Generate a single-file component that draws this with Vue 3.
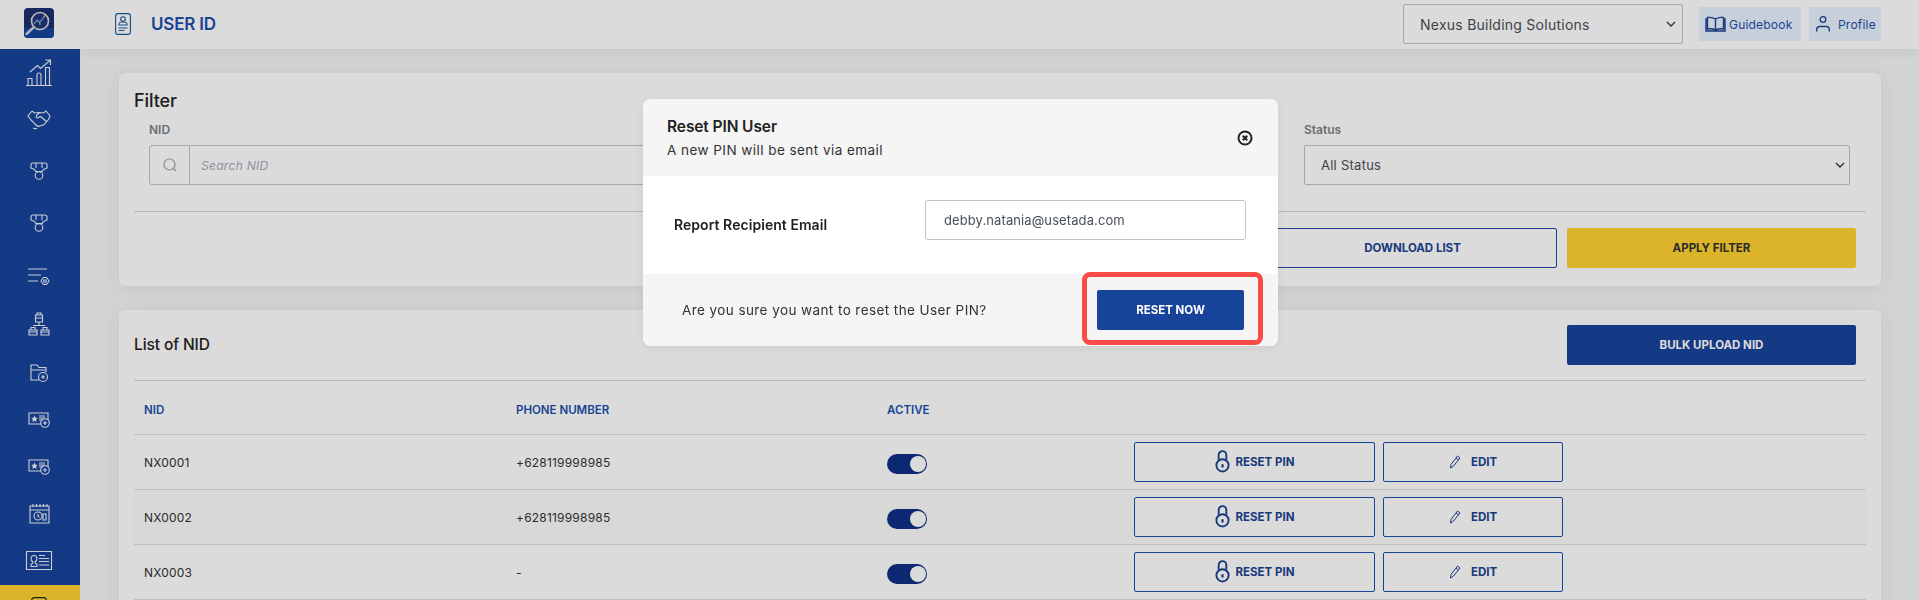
<script setup>
const rows = [
  { nid: 'NX0001', phone: '+628119998985' },
  { nid: 'NX0002', phone: '+628119998985' },
  { nid: 'NX0003', phone: '-' }
]
</script>

<template>
  <div class="app">
    <aside class="side">
      <div class="brand">
        <svg width="30" height="30" viewBox="0 0 30 30">
          <rect width="30" height="30" rx="4" fill="#1b2f6e" />
          <path d="M0 20h30v6a4 4 0 0 1-4 4H4a4 4 0 0 1-4-4z" fill="#18439b" />
          <circle cx="16" cy="13" r="8.500" fill="#20367a" stroke="#d8dce4" stroke-width="1.600" />
          <path d="M10 16l3-4 2.500 2.500L20 9" fill="none" stroke="#8fb6e8" stroke-width="1.100" />
          <circle cx="16" cy="16" r="1" fill="#6fc844" />
          <path d="M20 9l1-2" stroke="#ecd040" stroke-width="1.200" />
          <path d="M9.500 19.500L2.500 26" stroke="#cfd2da" stroke-width="2.400" stroke-linecap="round" />
        </svg>
      </div>
      <nav class="nav">
        <a class="item">
          <svg width="26" height="27" viewBox="0 0 26 27"><path d="M0 26.500h26M2 26v-6.500h4V26M11 26V16a2 2 0 0 1 4 0v10M19.500 26V8.500h4V26M4 13l7.500-6.500 3 3L24 1.500M19.500 1h5v5" /></svg>
        </a>
        <a class="item">
          <svg width="24" height="19" viewBox="0 0 24 19"><path d="M5 1L1 6l2.500 3.500L9 15q2 2 4 1l4-1.500 4.500-5L23 6l-4-5-2.500 2-4-.5-3 3q-1 2.500 1 2.500l3-1.500 6 5M5 1l2.500 2 5-.5M6 18q2 1 4 .5" /></svg>
        </a>
        <a class="item shift-m">
          <svg width="18" height="18" viewBox="0 0 18 18"><path d="M3 1h12a2 2 0 0 1 2 2v3q-4 1-5 3.500H6Q5 7 1 6V3a2 2 0 0 1 2-2zM6 1v5M12 1v5" /><circle cx="9" cy="13.500" r="3.800" /></svg>
        </a>
        <a class="item shift-a">
          <svg width="18" height="18" viewBox="0 0 18 18"><path d="M3 1h12a2 2 0 0 1 2 2v3q-4 1-5 3.500H6Q5 7 1 6V3a2 2 0 0 1 2-2zM6 1v5M12 1v5" /><circle cx="9" cy="13.500" r="3.800" /></svg>
        </a>
        <a class="item shift-b">
          <svg width="22" height="18" viewBox="0 0 22 18"><path d="M0 1h19M0 7h13M0 13h10M13 13l2.500-3.500h3L21 13l-2.500 3.500h-3z" /><circle cx="17" cy="13" r="1.300" /></svg>
        </a>
        <a class="item">
          <svg width="22" height="23" viewBox="0 0 22 23"><path d="M7.500 3h7v7h-7zM9 3V1h4v2M7.500 6h7M11 10v3.500M5 13.500h12M1 18h8v5H1zM13 18h8v5h-8zM3 18v-2.500h4V18M15 18v-2.500h4V18M1 20h8M13 20h8" /></svg>
        </a>
        <a class="item shift-c">
          <svg width="18" height="18" viewBox="0 0 18 18"><path d="M9 16H1V1h6l2 2.500h7V8M1 6h15" /><circle cx="13" cy="13" r="4.500" /><path d="M13 11v4M11 13h4" /></svg>
        </a>
        <a class="item">
          <svg width="22" height="16" viewBox="0 0 22 16"><path d="M13 12H1V1h19v7" /><path d="M6.500 3.500l1 2.300 2.300.2-1.700 1.600.5 2.400-2.100-1.200-2.100 1.200.5-2.400L3.200 6l2.300-.2z" fill="#eef1f7" stroke="none" /><path d="M11 4h6M11 6h6M11 8h4" /><circle cx="17" cy="11" r="4.300" /><path d="M17 9v4M15 11h4" /></svg>
        </a>
        <a class="item">
          <svg width="22" height="16" viewBox="0 0 22 16"><path d="M13 12H1V1h19v7" /><path d="M6.500 3.500l1 2.300 2.300.2-1.700 1.600.5 2.400-2.100-1.200-2.100 1.200.5-2.400L3.200 6l2.300-.2z" fill="#eef1f7" stroke="none" /><path d="M11 4h6M11 6h6M11 8h4" /><circle cx="17" cy="11" r="4.300" /><path d="M17 9v4M15 11h4" /></svg>
        </a>
        <a class="item">
          <svg width="21" height="21" viewBox="0 0 21 21"><path d="M1 3h19v17H1zM1 7h19M4 1v3M7.500 1v3M11 1v3M14.500 1v3M18 1v3" /><circle cx="9" cy="13" r="4" /><path d="M9 11v2.200l1.500 1M14 11h3v6h-3z" /></svg>
        </a>
        <a class="item">
          <svg width="26" height="19" viewBox="0 0 26 19"><path d="M.5.500h25v18H.5zM5 15.500v-2q2-1 2-2.500-2-1-2-4 .5-2.500 3-2.500T11 7q0 3-2 4 0 1.500 2 2.500v2zM13 4.500h6M13 7.500h10M13 10.500h10M13 14h10" /></svg>
        </a>
      </nav>
      <a class="item active">
        <svg width="16" height="22" viewBox="0 0 16 22"><rect x=".6" y=".6" width="14.800" height="20.800" rx="3" /></svg>
      </a>
    </aside>

    <div class="main">
      <header class="top">
        <div class="top-left">
          <svg class="doc" width="16" height="22" viewBox="0 0 16 22" fill="none" stroke="#1a5a9c" stroke-width="1.100">
            <rect x=".6" y=".6" width="14.800" height="20.800" rx="2.500" />
            <circle cx="8" cy="6" r="2.300" />
            <path d="M4 12v-1q0-2 4-2t4 2v1zM3.500 15h9M3.500 17.500h6" />
          </svg>
          <h1>USER ID</h1>
        </div>
        <div class="top-right">
          <div class="select company">
            <span>Nexus Building Solutions</span>
            <svg width="10" height="6" viewBox="0 0 10 6"><path d="M1 1l4 4 4-4" fill="none" stroke="#333" stroke-width="1.300" /></svg>
          </div>
          <a class="pill guide">
            <svg width="21" height="16" viewBox="0 0 21 16" fill="none" stroke="#1c4390" stroke-width="1.400"><path d="M10.500 3Q7 .8 2.500 1.500v11.500Q7 12.300 10.500 14q3.500-1.700 8-1V1.500Q14 .8 10.500 3zM10.500 3v11M2.500 3H1v12h19V3h-1.500" /></svg>
            Guidebook
          </a>
          <a class="pill profile">
            <svg width="14" height="16" viewBox="0 0 14 16" fill="none" stroke="#1c4390" stroke-width="1.300"><circle cx="7" cy="3.500" r="2.800" /><path d="M.7 15.500v-2q0-3 3-3h6.600q3 0 3 3v2" /></svg>
            Profile
          </a>
        </div>
      </header>

      <section class="card filter">
        <h2>Filter</h2>
        <div class="fields">
          <div class="field">
            <label>NID</label>
            <div class="search">
              <span class="prefix">
                <svg width="14" height="14" viewBox="0 0 14 14" fill="none" stroke="#9ba3ad" stroke-width="1.200"><circle cx="6.500" cy="6.500" r="5.500" /><path d="M10.500 10.500L13 13" /></svg>
              </span>
              <span class="ph">Search NID</span>
            </div>
          </div>
          <div class="field"></div>
          <div class="field">
            <label>Status</label>
            <div class="select">
              <span>All Status</span>
              <svg width="10" height="6" viewBox="0 0 10 6"><path d="M1 1l4 4 4-4" fill="none" stroke="#333" stroke-width="1.300" /></svg>
            </div>
          </div>
        </div>
        <div class="filter-actions">
          <button class="btn outline wide">DOWNLOAD LIST</button>
          <button class="btn yellow wide">APPLY FILTER</button>
        </div>
      </section>

      <section class="card list">
        <div class="list-head">
          <h3>List of NID</h3>
          <button class="btn solid wide">BULK UPLOAD NID</button>
        </div>
        <table>
          <thead>
            <tr>
              <th class="c1">NID</th>
              <th class="c2">PHONE NUMBER</th>
              <th class="c3">ACTIVE</th>
              <th></th>
            </tr>
          </thead>
          <tbody>
            <tr v-for="r in rows" :key="r.nid">
              <td class="txt">{{ r.nid }}</td>
              <td class="txt">{{ r.phone }}</td>
              <td><span class="toggle"><i></i></span></td>
              <td>
                <div class="acts">
                  <button class="btn outline reset">
                    <svg width="15" height="23" viewBox="0 0 13 21" fill="none" stroke="#1c4390" stroke-width="1.700"><path d="M3 9V4.500a3.500 3.500 0 0 1 7 0V9" /><circle cx="6.500" cy="14" r="5.600" /><path d="M6.500 13v3" stroke-width="2" /></svg>
                    RESET PIN
                  </button>
                  <button class="btn outline edit">
                    <svg width="12" height="14" viewBox="0 0 12 14" fill="none" stroke="#1c4390" stroke-width="1"><path d="M8.500 1l2.500 2-6.500 8L1.500 13l.5-3.500zM7 3l2.500 2" /></svg>
                    EDIT
                  </button>
                </div>
              </td>
            </tr>
          </tbody>
        </table>
      </section>
    </div>

    <div class="overlay">
      <div class="modal">
        <div class="m-head">
          <div>
            <h4>Reset PIN User</h4>
            <p>A new PIN will be sent via email</p>
          </div>
          <svg class="close" width="16" height="16" viewBox="0 0 16 16" fill="none" stroke="#222"><circle cx="8" cy="8" r="6.500" stroke-width="2" /><path d="M5.800 5.800l4.400 4.400M10.200 5.800l-4.400 4.400" stroke-width="2.200" /></svg>
        </div>
        <div class="m-body">
          <label>Report Recipient Email</label>
          <div class="email">debby.natania@usetada.com</div>
        </div>
        <div class="m-foot">
          <span>Are you sure you want to reset the User PIN?</span>
          <button class="btn solid now">RESET NOW</button>
        </div>
        <div class="mark"></div>
      </div>
    </div>
  </div>
</template>

<style>
html, body { margin: 0; height: 600px; overflow: hidden; }
</style>

<style scoped>
.app {
  display: flex;
  width: 1919px;
  height: 600px;
  overflow: hidden;
  background: #f4f6f8;
  font-family: Inter, "Open Sans", sans-serif;
  color: #222;
}
.side { width: 80px; flex: none; background: #18439b; display: flex; flex-direction: column; z-index: 2; }
.brand { height: 49px; flex: none; background: #fff; display: flex; align-items: center; justify-content: center; padding: 0 2px 3px 0; box-sizing: border-box; }
.nav { display: flex; flex-direction: column; flex: none; height: 536px; box-sizing: border-box; }
.item { height: 47px; flex: none; display: flex; align-items: center; justify-content: center; }
.item svg { fill: none; stroke: #eef1f7; stroke-width: 1.100; overflow: visible; margin-left: -2px; }
.shift-m { margin-top: 4px; }
.shift-a { margin-top: 5px; }
.shift-b { margin-top: 7px; }
.shift-c { margin-top: 2px; }
.active { background: #ffd232; height: 60px; align-items: flex-start; padding-top: 12px; box-sizing: border-box; }
.active svg { stroke: #222; }

.main { flex: 1; min-width: 0; display: flex; flex-direction: column; align-items: flex-start; }
.top {
  height: 49px; width: 100%; flex: none; box-sizing: border-box; background: #fff;
  box-shadow: 0 2px 12px rgba(0, 0, 0, .07);
  display: flex; align-items: center; justify-content: space-between;
  padding: 0 38px 0 35px;
}
.top-left { display: flex; align-items: center; gap: 20px; }
.doc { margin-bottom: 2px; }
h1 { margin: 0 0 2px; font-size: 17px; font-weight: 600; letter-spacing: -.2px; color: #1c4fae; }
.top-right { display: flex; align-items: center; margin-top: -1px; }
.select {
  display: flex; align-items: center; justify-content: space-between; box-sizing: border-box;
  height: 40px; border: 1px solid #bcc4cf; border-radius: 2px; padding: 0 4px 0 16px;
  font-size: 13px; color: #495057; letter-spacing: .25px; background: #fff;
}
.company { width: 280px; height: 40px; padding: 0 6px 0 16px; font-size: 14px; margin-right: 16px; }
.pill { height: 34px; display: flex; align-items: center; background: #e8f3fe; color: #1c4fae; font-size: 12px; box-sizing: border-box; letter-spacing: .2px; }
.guide { width: 102px; gap: 3px; padding-left: 6px; margin-right: 8px; }
.profile { width: 72px; gap: 8px; padding-left: 7px; }

.card { background: #fff; border-radius: 6px; margin-left: 39px; width: 1762px; box-sizing: border-box; padding: 0 15px; box-shadow: 0 2px 18px rgba(0, 0, 0, .07); flex: none; }
.filter { margin-top: 24px; height: 213px; padding-top: 17px; }
h2 { margin: 0; font-size: 18px; font-weight: 500; line-height: 22px; letter-spacing: -.1px; }
.fields { display: grid; grid-template-columns: 546px 546px 546px; column-gap: 31.500px; padding: 0 0 0 15px; margin-top: 10px; }
.field label { display: block; font-size: 12px; font-weight: 600; line-height: 15px; color: #7b7f85; margin-bottom: 8px; }
.search { display: flex; align-items: center; height: 40px; box-sizing: border-box; border: 1px solid #bcc4cf; border-radius: 3px; }
.prefix { width: 40px; height: 100%; display: flex; align-items: center; justify-content: center; border-right: 1px solid #bcc4cf; box-sizing: border-box; }
.ph { margin-left: 11px; font-size: 12px; font-style: italic; color: #a5adb8; letter-spacing: .3px; }
.filter-actions { margin-top: 26px; padding: 16px 10px 0 0; border-top: 1px solid #d6d8db; display: flex; justify-content: flex-end; gap: 10px; }

.btn { font-family: inherit; font-size: 11.500px; font-weight: 700; height: 40px; box-sizing: border-box; border-radius: 2px; cursor: pointer; letter-spacing: 0; }
.wide { width: 289px; }
.outline { background: #fff; color: #1c4390; border: 1px solid #1c4fae; }
.yellow { background: #ffd232; color: #333; border: 0; }
.solid { background: #18439b; color: #fff; border: 0; }

.list { margin-top: 24px; height: 400px; }
.list-head { display: flex; align-items: center; justify-content: space-between; height: 71px; padding: 0 10px 1px 0; box-sizing: border-box; border-bottom: 1px solid #d6d8db; }
h3 { margin: 0 0 1px; font-size: 15.500px; font-weight: 500; letter-spacing: -.1px; }
table { width: 100%; border-collapse: collapse; table-layout: fixed; font-size: 12px; }
th { height: 53px; text-align: left; font-size: 11.500px; font-weight: 600; color: #1c4fae; padding: 6px 0 0 10px; box-sizing: border-box; }
.c1 { width: 372px; }
.c2 { width: 371px; }
.c3 { width: 247px; }
thead tr, tbody tr { border-bottom: 1px solid #dde0e6; }
tbody tr { height: 55px; }
tbody tr:nth-child(even) { background: #fcfcfc; }
td { padding: 0 0 0 10px; color: #333; letter-spacing: .2px; box-sizing: border-box; }
td.txt { padding-top: 2px; }
.toggle { display: block; width: 40px; height: 20px; border-radius: 10px; background: #102f86; position: relative; margin-top: 4px; }
.toggle i { position: absolute; right: 1px; top: 2px; width: 16px; height: 16px; border-radius: 50%; background: #fff; }
.acts { display: flex; gap: 8px; }
.reset { width: 241px; display: flex; align-items: center; justify-content: center; gap: 6px; height: 40px; }
.edit { width: 180px; display: flex; align-items: center; justify-content: center; gap: 10px; height: 40px; }

.overlay { position: fixed; inset: 0; background: rgba(0, 0, 0, .14); z-index: 5; }
.modal { position: absolute; left: 643px; top: 99px; width: 635px; height: 247px; background: #fff; border-radius: 8px; display: flex; flex-direction: column; box-shadow: 0 2px 10px rgba(0, 0, 0, .08); }
.m-head { height: 77px; flex: none; background: #f5f5f5; border-radius: 8px 8px 0 0; display: flex; align-items: center; justify-content: space-between; padding: 0 24px; box-sizing: border-box; }
h4 { margin: 0; font-size: 15.500px; font-weight: 600; line-height: 22px; letter-spacing: -.1px; }
.m-head p { margin: 2px 0 0; font-size: 13.500px; line-height: 20px; color: #333; letter-spacing: .45px; }
.close { margin-right: 1px; margin-top: 0; }
.m-body { flex: 1; display: flex; align-items: flex-start; padding: 24px 32px 0 31px; box-sizing: border-box; justify-content: space-between; }
.m-body label { font-size: 14px; font-weight: 600; margin-top: 16px; color: #222; letter-spacing: .05px; }
.email { width: 321px; height: 40px; box-sizing: border-box; border: 1px solid #bcc4cf; border-radius: 3px; display: flex; align-items: center; padding: 0 0 0 18px; font-size: 13px; color: #495057; letter-spacing: .1px; }
.m-foot { height: 72px; flex: none; background: #f5f5f5; border-radius: 0 0 8px 8px; display: flex; align-items: center; justify-content: space-between; padding: 0 34px 0 39px; box-sizing: border-box; font-size: 13.500px; color: #333; letter-spacing: .42px; }
.now { width: 147px; height: 40px; margin-top: 0; }
.mark { position: absolute; left: 439px; top: 173px; width: 181px; height: 73px; box-sizing: border-box; border: 5px solid #f94c48; border-radius: 8px; }
</style>
